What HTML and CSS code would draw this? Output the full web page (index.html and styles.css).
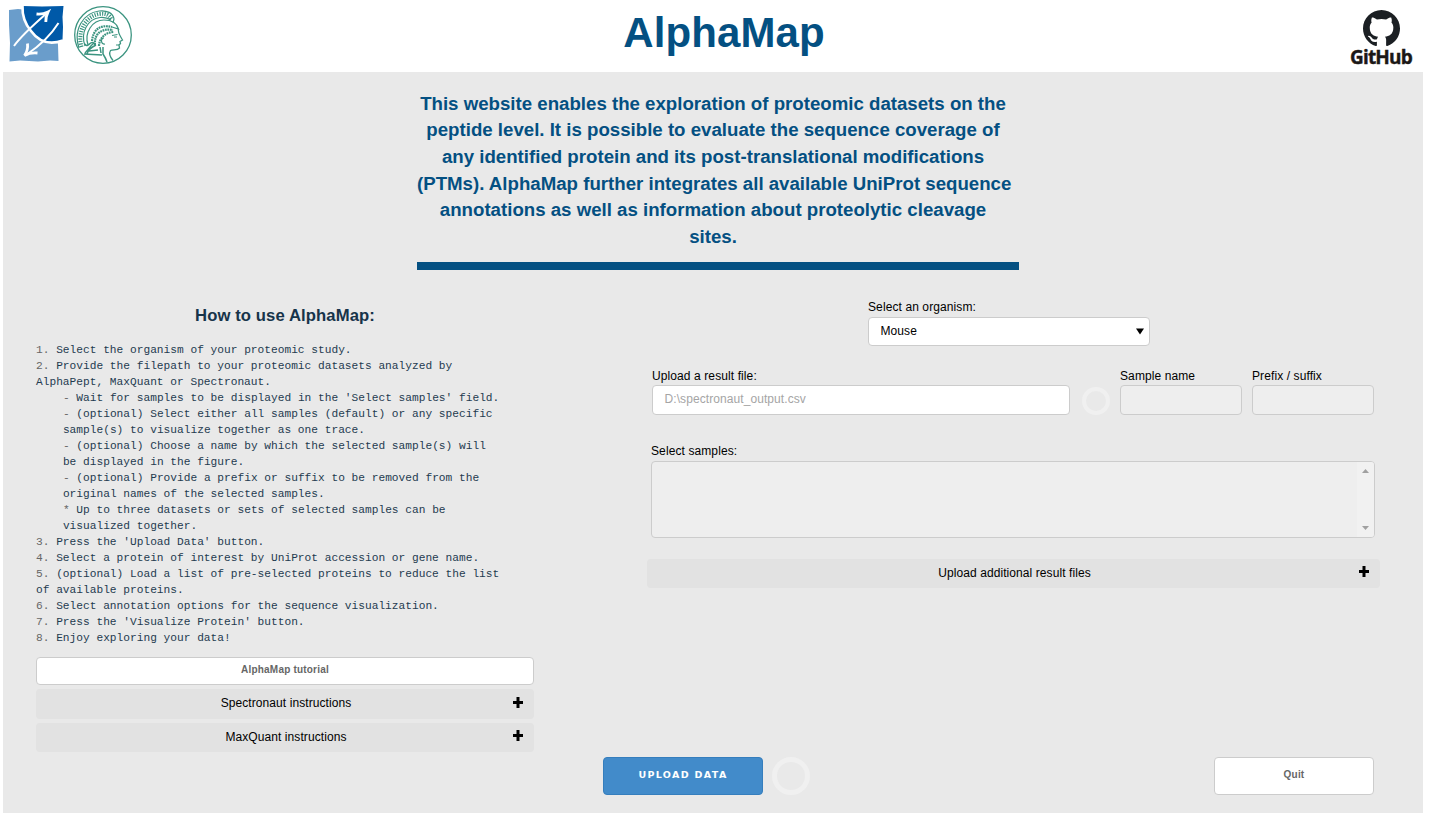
FILE: index.html
```html
<!DOCTYPE html>
<html lang="en">
<head>
<meta charset="utf-8">
<title>AlphaMap</title>
<link rel="stylesheet" href="styles.css">
</head>
<body>
<header class="header">
  <div class="logos">
    <svg class="logo-mpi" viewBox="0 0 56 58" width="56" height="58">
      <path d="M1 5 L10 4 20 5 30 4 46 6 50 40 50.500 56 42 55.500 30 56.500 12 55.500 1.500 56.500 2 38 1 20Z" fill="#6a9dcb"/>
      <path d="M15 1 L34 1.500 55.500 1 54.500 12 55 22 54.500 35 C49 38 41 39 34 36 C29 33 26 30 22.700 25 C18 20 14 11 15 1Z" fill="#0059a8"/>
      <path d="M14.500 1 C14 12 18 20 23 26 C31 37 41 40.500 55 35.500" fill="none" stroke="#fff" stroke-width="2.600"/>
      <g fill="none" stroke="#fff">
        <path d="M6 41 C13 31 23 22 39 8" stroke-width="2"/>
        <path d="M28.500 9 C33 9.500 37 8.500 40 7 C38.500 10 37.500 13 37.800 17" stroke-width="2.800"/>
        <path d="M50.500 18 C43 30 33 40 18 50" stroke-width="2"/>
        <path d="M19.500 38.500 C20 43 19 47 16.500 50.500 C20 48.500 24 47.500 29.500 48" stroke-width="2.800"/>
      </g>
    </svg>
    <svg class="logo-minerva" viewBox="0 0 58 58" width="58" height="58" fill="none" stroke="#3b9480">
      <circle cx="29" cy="29" r="28.300" stroke-width="1.300"/>
      <path d="M5 42 C-1 24 9 7 25 5 C33 4 39 7 40 13 L39 17" stroke-width="1.200"/>
      <path d="M7.500 41 C3 25 12 10 25 8 C32 7 36 9 37.500 14" stroke-width="4" stroke-dasharray="1.200 1.300"/>
      <path d="M11 40 C6 26 14 13 26 11.500 C31 11 34 12 37 14" stroke-width="1.200"/>
      <path d="M14 39 C10 27 18 14 30 14 C38 14 43 18 44.500 23 L38 21" stroke-width="1.200"/>
      <path d="M18 35 C19 24 26 18 38 21 M21 39 C20 28 27 22 39 24 M25 40 C25 33 31 26 40 26" stroke-width="2.200" stroke-dasharray="1.800 .7"/>
      <path d="M44.500 23 C43.500 27 47 31 48.500 34 L46 35.500 46.500 37.500 45 39 45.500 42 C43 45 39 43 36.500 44.500 C35 47 36 51 39 54.500" stroke-width="1.300"/>
      <path d="M38 29.500 L43.500 28.500 M40 31 L43 31 M42 39 L45 39 M30 32 C26 32 27 39 31 38" stroke-width="1.200"/>
      <path d="M11 38 C14 43 16 34 20 37 C16 40 14 44 11 47 M22 39 C18 41 14 43 13 48 M26 41 L27 47 M29 41 L29 48 C31 51 32 53 33 56 M10 48 L28 49 M15 45 L24 44" stroke-width="1.500"/>
    </svg>
  </div>
  <h1 class="title">AlphaMap</h1>
  <div class="github">
    <svg viewBox="0 0 16 16" width="37" height="37"><path fill="#1b1f23" d="M8 0C3.58 0 0 3.58 0 8c0 3.54 2.29 6.53 5.47 7.59.4.07.55-.17.55-.38 0-.19-.01-.82-.01-1.49-2.01.37-2.53-.49-2.69-.94-.09-.23-.48-.94-.82-1.13-.28-.15-.68-.52-.01-.53.63-.01 1.08.58 1.23.82.72 1.21 1.87.87 2.33.66.07-.52.28-.87.51-1.07-1.78-.2-3.64-.89-3.64-3.95 0-.87.31-1.59.82-2.15-.08-.2-.36-1.02.08-2.12 0 0 .67-.21 2.2.82a7.6 7.6 0 0 1 4 0c1.53-1.04 2.2-.82 2.2-.82.44 1.1.16 1.92.08 2.12.51.56.82 1.27.82 2.15 0 3.07-1.87 3.75-3.65 3.95.29.25.54.73.54 1.48 0 1.07-.01 1.93-.01 2.2 0 .21.15.46.55.38A8.01 8.01 0 0 0 16 8c0-4.42-3.58-8-8-8Z"/></svg>
    <span class="github-name">GitHub</span>
  </div>
</header>
<main class="panel">
  <section class="intro">
    <p class="intro-text">This website enables the exploration of proteomic datasets on the<br>peptide level. It is possible to evaluate the sequence coverage of<br>any identified protein and its post-translational modifications<br>(PTMs). AlphaMap further integrates all available UniProt sequence<br>annotations as well as information about proteolytic cleavage<br>sites.</p>
    <div class="rule"></div>
  </section>
  <div class="columns">
    <section class="guide">
      <h2 class="guide-title">How to use AlphaMap:</h2>
      <div class="steps">
        <div class="line"><span class="mark">1. </span><span>Select the organism of your proteomic study.</span></div>
        <div class="line"><span class="mark">2. </span><span>Provide the filepath to your proteomic datasets analyzed by</span></div>
        <div class="line">AlphaPept, MaxQuant or Spectronaut.</div>
        <div class="line nested"><span class="mark">- </span><span>Wait for samples to be displayed in the 'Select samples' field.</span></div>
        <div class="line nested"><span class="mark">- </span><span>(optional) Select either all samples (default) or any specific</span></div>
        <div class="line nested">sample(s) to visualize together as one trace.</div>
        <div class="line nested"><span class="mark">- </span><span>(optional) Choose a name by which the selected sample(s) will</span></div>
        <div class="line nested">be displayed in the figure.</div>
        <div class="line nested"><span class="mark">- </span><span>(optional) Provide a prefix or suffix to be removed from the</span></div>
        <div class="line nested">original names of the selected samples.</div>
        <div class="line nested"><span class="mark">* </span><span>Up to three datasets or sets of selected samples can be</span></div>
        <div class="line nested">visualized together.</div>
        <div class="line"><span class="mark">3. </span><span>Press the 'Upload Data' button.</span></div>
        <div class="line"><span class="mark">4. </span><span>Select a protein of interest by UniProt accession or gene name.</span></div>
        <div class="line"><span class="mark">5. </span><span>(optional) Load a list of pre-selected proteins to reduce the list</span></div>
        <div class="line">of available proteins.</div>
        <div class="line"><span class="mark">6. </span><span>Select annotation options for the sequence visualization.</span></div>
        <div class="line"><span class="mark">7. </span><span>Press the 'Visualize Protein' button.</span></div>
        <div class="line"><span class="mark">8. </span><span>Enjoy exploring your data!</span></div>
      </div>
      <button class="btn tutorial">AlphaMap tutorial</button>
      <div class="card first"><span class="card-title">Spectronaut instructions</span><svg class="plus" viewBox="0 0 10 11" width="10" height="11"><path d="M0 4h3.500V0h3v4H10v3H6.500v4h-3V7H0z"/></svg></div>
      <div class="card second"><span class="card-title">MaxQuant instructions</span><svg class="plus" viewBox="0 0 10 11" width="10" height="11"><path d="M0 4h3.500V0h3v4H10v3H6.500v4h-3V7H0z"/></svg></div>
    </section>
    <section class="form">
      <div class="field organism">
        <label class="label">Select an organism:</label>
        <div class="input select"><span class="value">Mouse</span><svg viewBox="0 0 8 7" width="8" height="7"><path d="M0 0.500h8L4 6.500z"/></svg></div>
      </div>
      <div class="file-row">
        <div class="field file"><label class="label">Upload a result file:</label><div class="input placeholder">D:\spectronaut_output.csv</div></div>
        <div class="spinner small"></div>
        <div class="field narrow"><label class="label">Sample name</label><div class="input disabled"></div></div>
        <div class="field narrow"><label class="label">Prefix / suffix</label><div class="input disabled"></div></div>
      </div>
      <div class="field samples">
        <label class="label">Select samples:</label>
        <div class="listbox"><div class="scrollbar">
          <svg viewBox="0 0 7 4" width="7" height="4"><path d="M0 4L3.500 0 7 4z"/></svg>
          <svg viewBox="0 0 7 4" width="7" height="4"><path d="M0 0L3.500 4 7 0z"/></svg>
        </div></div>
      </div>
      <div class="card additional"><span class="card-title">Upload additional result files</span><svg class="plus" viewBox="0 0 10 11" width="10" height="11"><path d="M0 4h3.500V0h3v4H10v3H6.500v4h-3V7H0z"/></svg></div>
    </section>
  </div>
  <footer class="actions">
    <button class="btn upload">UPLOAD DATA</button>
    <div class="spinner"></div>
    <button class="btn quit">Quit</button>
  </footer>
</main>
</body>
</html>
```
FILE: styles.css
```css
* { box-sizing: border-box; }
body { margin: 0; background: #fff; font: 12px "Liberation Sans", Arial, sans-serif; letter-spacing: 0.08px; color: #000; overflow: hidden; }
.header { height: 72px; display: grid; grid-template-columns: 400px 1fr 400px; }
.logos { display: flex; gap: 10px; padding: 5px 0 0 8px; }
.logo-minerva { margin-top: 1px; }
.title { margin: 0; padding: 9px 0 0 14px; text-align: center; font-size: 42px; line-height: 48px; color: #045082; letter-spacing: 0.1px; }
.github { display: flex; flex-direction: column; align-items: center; width: 64px; margin: 10px 21px 0 auto; }
.github-name { font: bold 19px/20px "Open Sans", sans-serif; color: #1b1817; letter-spacing: -0.8px; -webkit-text-stroke: 0.4px #1b1817; }
.panel { margin-left: 3px; width: 1420px; height: 741px; background: #e9e9e9; display: flex; flex-direction: column; }
.intro { width: 602px; margin-left: 414px; padding-top: 18.6px; }
.intro-text { margin: 0 10px 0 0; text-align: center; white-space: nowrap; font-size: 18.67px; font-weight: bold; line-height: 26.67px; letter-spacing: 0; color: #045082; }
.rule { height: 8px; background: #045082; margin-top: 11.38px; }
.columns { display: flex; justify-content: space-between; padding: 0 43px 0 33px; height: 487px; }
.guide { width: 498px; padding-top: 36px; }
.guide-title { margin: 0; text-align: center; font-size: 16.67px; line-height: 20px; letter-spacing: 0.1px; color: #17344a; }
.steps { margin: 16px 0 11px; font: 11.2px/16px "Liberation Mono", monospace; letter-spacing: 0; color: #1f3b50; height: 304px; }
.line { display: flex; height: 16px; white-space: pre; }
.nested { padding-left: 26.9px; }
.mark { color: #666; }
.btn { display: block; padding: 0 0 3px; border: 1px solid #ccc; border-radius: 4px; background: #fff; color: #666; font: bold 10px "Liberation Sans", Arial, sans-serif; letter-spacing: 0.2px; text-align: center; }
.tutorial { width: 498px; height: 28px; }
.card { position: relative; height: 29px; margin-top: 4px; border-radius: 4px; background: #e2e2e2; display: flex; align-items: center; justify-content: center; padding-left: 2px; }
.card.first { height: 30px; padding-bottom: 2px; }
.card-title { line-height: 16px; margin-top: -1px; }
.plus { position: absolute; right: 11px; top: 8px; }
.second .plus { top: 7px; }
.form { width: 733px; padding-top: 29px; }
.label { display: block; height: 18px; line-height: 16px; letter-spacing: 0.1px; }
.input { height: 30px; border: 1px solid #ccc; border-radius: 4px; background: #fff; padding: 0 11.500px; line-height: 26px; }
.organism { width: 282px; margin-left: 221px; }
.select { height: 29px; display: flex; justify-content: space-between; align-items: center; padding: 0 5px 0 11.500px; }
.value { padding-bottom: 2px; }
.file-row { display: flex; padding-left: 5px; margin-top: 22px; }
.file-row > * { flex: none; }
.file-row .label { height: 17px; }
.file { width: 418px; }
.placeholder { color: #a5a5a5; }
.disabled { background: #eee; }
.narrow { width: 122px; margin-right: 10px; }
.spinner { flex: none; width: 38px; height: 38px; border: 5px solid #f0f0f0; border-radius: 50%; }
.spinner.small { width: 28px; height: 28px; border-width: 4px; margin: 19px 10px 0 12px; }
.samples { margin: 28px 5px 0 4px; }
.listbox { height: 77px; border: 1px solid #ccc; border-radius: 4px; background: #eee; display: flex; justify-content: flex-end; overflow: hidden; }
.scrollbar { width: 17px; background: #f1f1f1; display: flex; flex-direction: column; justify-content: space-between; align-items: center; padding: 7px 0; fill: #a0a0a0; }
.additional { height: 29px; margin-top: 21px; }
.additional .plus { top: 7px; }
.actions { display: flex; padding-left: 600px; gap: 9px; }
.upload { width: 160px; height: 38px; background: #428bca; border-color: #357ebd; color: #fff; font: bold 9.5px "DejaVu Sans", Verdana, sans-serif; letter-spacing: 1.35px; }
.quit { width: 160px; height: 38px; margin-left: 395px; }
```
